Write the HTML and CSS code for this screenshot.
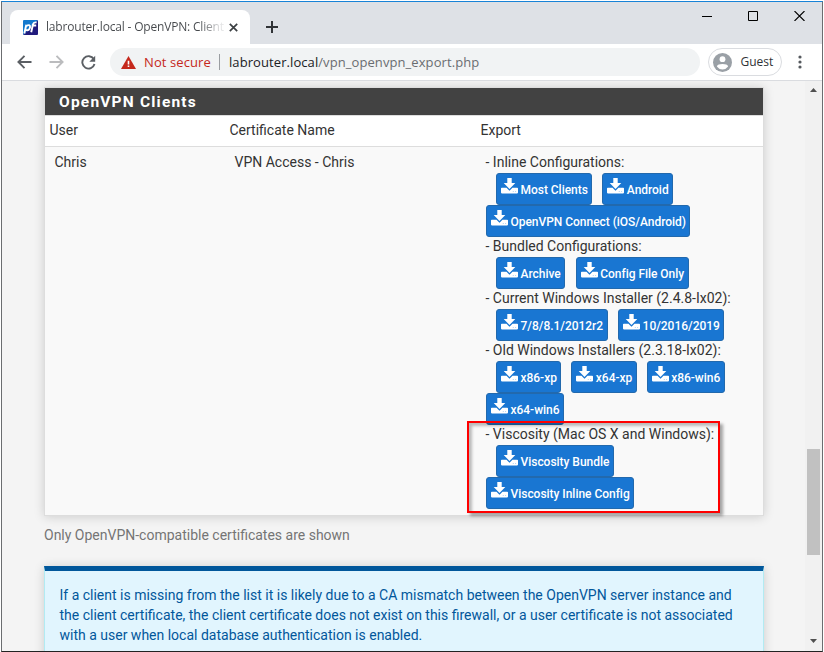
FILE: index.html
```
<!DOCTYPE html>
<html lang="en">
<head>
<meta charset="utf-8">
<title>labrouter.local - OpenVPN: Client Export</title>
<link rel="stylesheet" href="styles.css">
</head>
<body>
<svg class="defs" aria-hidden="true">
  <symbol id="download" viewBox="0 0 17 16">
    <path fill="currentColor" d="M6.300 0h4.400v5h3.600L8.500 11 2.700 5h3.600zM.8 9.800h4.700L8.500 12.800l3-3h4.700q.8 0 .8.8v4q0 .8-.8.8H.8Q0 15.400 0 14.600v-4q0-.8.8-.8z"/>
    <path class="led" d="M11.800 13.200h.9v.9h-.9zM14.200 13.200h.9v.9h-.9z"/>
  </symbol>
</svg>
<div class="window">
  <header class="titlebar">
    <div class="tab">
      <svg class="favicon" width="15" height="15" viewBox="0 0 15 15">
        <defs><linearGradient id="fav" x1="0" y1="0" x2="1" y2="1"><stop offset=".45" stop-color="#1479cd"/><stop offset=".55" stop-color="#211a7c"/></linearGradient></defs>
        <rect width="15" height="15" rx="1" fill="url(#fav)"/>
        <g fill="none" stroke="#fff" stroke-width="1.900"><path d="M1.300 13.500 3.300 4.800M3 6.200Q7.300 3.700 7.100 7.200 6.400 11.200 2.800 9.900"/><path d="M8.200 12.200 10 4.300Q10.600 1.900 13.600 2.500M8.700 5.500h4.500"/></g>
      </svg>
      <span class="tab-title">labrouter.local - OpenVPN: Client</span>
      <svg class="tab-close" width="9" height="9" viewBox="0 0 9 9"><path d="M.8.8l7.400 7.400M8.200.8.8 8.200" stroke="#3c4043" stroke-width="1.700"/></svg>
    </div>
    <svg class="new-tab" width="12" height="12" viewBox="0 0 12 12"><path d="M6 0v12M0 6h12" stroke="#303336" stroke-width="2"/></svg>
    <div class="controls">
      <svg width="10" height="10" viewBox="0 0 10 10"><path d="M0 5.500h10" stroke="#000"/></svg>
      <svg width="10" height="10" viewBox="0 0 10 10"><path d="M.5.5h9v9h-9z" fill="none" stroke="#000"/></svg>
      <svg width="11" height="10" viewBox="0 0 11 10"><path d="M.5 0l10 10M10.500 0l-10 10" stroke="#000" stroke-width="1.100"/></svg>
    </div>
  </header>
  <nav class="toolbar">
    <svg class="back" width="15" height="14" viewBox="0 0 15 14"><path d="M14.500 7H2M7.500.8 1.400 7l6.100 6.200" fill="none" stroke="#5b5f64" stroke-width="1.900"/></svg>
    <svg class="forward" width="15" height="14" viewBox="0 0 15 14"><path d="M.5 7H13M7.500.8 13.600 7l-6.100 6.200" fill="none" stroke="#bbbcbe" stroke-width="1.900"/></svg>
    <svg class="reload" width="15" height="15" viewBox="0 0 15 15"><path d="M12.800 4.100A6.200 6.200 0 1 0 13.500 9" fill="none" stroke="#5b5f64" stroke-width="1.900"/><path d="M14.200.8v6H8.300z" fill="#5b5f64"/></svg>
    <div class="omnibox">
      <svg width="15" height="13" viewBox="0 0 15 13"><path d="M7.500 0 15 13H0z" fill="#c5281c"/><path d="M6.700 4.800h1.600v3.600H6.700zM6.700 9.500h1.600v1.600H6.700z" fill="#fff"/></svg>
      <span class="insecure">Not secure</span>
      <span class="divider"></span>
      <span class="url"><b>labrouter.local</b>/vpn_openvpn_export.php</span>
    </div>
    <div class="profile">
      <svg width="19" height="19" viewBox="0 0 19 19"><circle cx="9.500" cy="9.500" r="9.500" fill="#9aa0a6"/><circle cx="9.500" cy="6.200" r="2.900" fill="#fff"/><path d="M3.900 13.400C4.300 10.200 14.700 10.200 15.100 13.400Q13 16.400 9.500 16.400T3.900 13.400z" fill="#fff"/></svg>
      <span>Guest</span>
    </div>
    <svg class="menu" width="4" height="14" viewBox="0 0 4 14"><g fill="#55595e"><circle cx="2" cy="2" r="1.600"/><circle cx="2" cy="7" r="1.600"/><circle cx="2" cy="12" r="1.600"/></g></svg>
  </nav>
  <div class="viewport">
    <main class="page">
      <section class="panel">
        <h2>OpenVPN Clients</h2>
        <div class="row head"><span>User</span><span>Certificate Name</span><span>Export</span></div>
        <div class="row body">
          <span>Chris</span><span>VPN Access - Chris</span>
          <div class="exports">
            <p>- Inline Configurations:</p>
            <div class="buttons indent"><a><svg><use href="#download"/></svg>Most Clients</a><a><svg><use href="#download"/></svg>Android</a></div>
            <div class="buttons"><a><svg><use href="#download"/></svg>OpenVPN Connect (iOS/Android)</a></div>
            <p>- Bundled Configurations:</p>
            <div class="buttons indent wide"><a><svg><use href="#download"/></svg>Archive</a><a><svg><use href="#download"/></svg>Config File Only</a></div>
            <p>- Current Windows Installer (2.4.8-Ix02):</p>
            <div class="buttons indent wide"><a><svg><use href="#download"/></svg>7/8/8.1/2012r2</a><a><svg><use href="#download"/></svg>10/2016/2019</a></div>
            <p>- Old Windows Installers (2.3.18-Ix02):</p>
            <div class="buttons indent"><a><svg><use href="#download"/></svg>x86-xp</a><a><svg><use href="#download"/></svg>x64-xp</a><a><svg><use href="#download"/></svg>x86-win6</a></div>
            <div class="buttons"><a><svg><use href="#download"/></svg>x64-win6</a></div>
            <div class="viscosity">
              <p>- Viscosity (Mac OS X and Windows):</p>
              <div class="buttons indent"><a><svg><use href="#download"/></svg>Viscosity Bundle</a></div>
              <div class="buttons"><a><svg><use href="#download"/></svg>Viscosity Inline Config</a></div>
              <i class="highlight"></i>
            </div>
          </div>
        </div>
      </section>
      <p class="help">Only OpenVPN-compatible certificates are shown</p>
      <div class="info">If a client is missing from the list it is likely due to a CA mismatch between the OpenVPN server instance and<br>the client certificate, the client certificate does not exist on this firewall, or a user certificate is not associated<br>with a user when local database authentication is enabled.</div>
    </main>
    <div class="scrollbar">
      <svg width="7" height="4" viewBox="0 0 7 4"><path d="M0 4 3.500 0 7 4z" fill="#505050"/></svg>
      <div class="thumb"></div>
      <svg width="7" height="4" viewBox="0 0 7 4"><path d="M0 0h7L3.500 4z" fill="#505050"/></svg>
    </div>
  </div>
</div>
</body>
</html>
```
FILE: styles.css
```
* { box-sizing: border-box; }
body { margin: 0; background: #fff; overflow: hidden; font: 14px/20px Roboto, sans-serif; }
p, h2 { margin: 0; }
svg { flex: none; display: block; }
.defs { position: absolute; width: 0; height: 0; }

.window {
  width: 822px; height: 651px; margin: 1px 0 0 1px;
  display: flex; flex-direction: column;
  border: 1px solid #6b6d70; border-top-color: #1883d7; border-bottom-color: #222;
  font-family: "Open Sans", sans-serif;
}

.titlebar { height: 42px; flex: none; background: #dee1e6; display: flex; align-items: flex-start; }
.tab {
  width: 240px; height: 34px; margin: 8px 0 0 8px; padding: 0 0 0 12.500px;
  display: flex; align-items: center; background: #fff; border-radius: 8px 8px 0 0;
}
.tab-title {
  width: 182px; flex: none; margin-left: 8.500px; white-space: nowrap;
  font-size: 12px; line-height: 20px; letter-spacing: -.18px;
  background: linear-gradient(90deg, #45484c 84%, #e2e3e4 96%); -webkit-background-clip: text; color: transparent;
}
.tab-close { margin-left: 1px; }
.new-tab { margin: 19px 0 0 16px; }
.controls { display: flex; gap: 36px; margin: 9px 17px 0 auto; }

.toolbar { height: 36px; flex: none; background: #fff; display: flex; align-items: center; padding-left: 14.500px; }
.forward { margin-left: 17px; }
.reload { margin-left: 17px; }
.omnibox {
  width: 590px; height: 28px; margin-left: 14.500px; padding-left: 10.500px;
  border-radius: 14px; background: #f1f3f4; display: flex; align-items: center; white-space: nowrap; font-size: 13px;
}
.insecure { width: 67px; margin-left: 8.500px; color: #c5281c; letter-spacing: .1px; }
.divider { width: 1px; height: 16px; margin: 0 9px 0 8px; background: #9a9da1; }
.url { color: #6a6d71; letter-spacing: .08px; }
.url b { font-weight: 400; color: #202124; }
.profile {
  width: 74px; height: 28px; margin-left: 8px; padding-left: 3.500px;
  border: 1px solid #dadce0; border-radius: 14px; display: flex; align-items: center; gap: 9px;
  font-size: 12px; color: #303336;
}
.menu { margin-left: 16px; }

.viewport { flex: 1; min-height: 0; display: flex; border-top: 1px solid #dadce0; background: #f4f4f4; overflow: hidden; }
.page { flex: 1; padding: 6px 41px 0 42px; font-family: Roboto, sans-serif; color: #333; }
.panel {
  height: 429px; border: 1px solid #ddd; background: #f9f9f9;
  box-shadow: 0 1px 10px rgba(0, 0, 0, .16);
}
.panel h2 {
  height: 27px; padding: 4px 0 0 14px; background: #424242; color: #fff;
  font-size: 15.500px; line-height: 20px; font-weight: 700; letter-spacing: 1.200px;
}
.row { display: grid; grid-template-columns: 180px 251px 1fr; padding-left: 4.500px; }
.head { height: 32px; padding-top: 4px; background: #fff; border-top: 1px solid #ddd; border-bottom: 1px solid #ddd; }
.body { padding: 5px 0 0 9.500px; white-space: nowrap; }
.exports p { height: 21px; }
.exports .buttons + p, .viscosity p { margin-top: -1px; }
.buttons { display: flex; gap: 10px; padding-left: .5px; }
.indent { padding-left: 10.500px; }
.wide { gap: 10.500px; }
.buttons a {
  height: 32px; padding: 0 3.500px 0 4px; display: flex; align-items: flex-start;
  background: #1976d2; border: 1px solid #2269ad; border-radius: 3px;
  color: #fff; font-size: 12px; line-height: 32px; font-weight: 500; letter-spacing: -.03px;
}
.buttons svg { width: 17px; height: 16px; margin: 4px 2.500px 0 0; }
.led { fill: #8fbdea; }
.viscosity { position: relative; width: 230px; }
.highlight {
  position: absolute; left: -18.500px; top: -3px; width: 253px; height: 92px;
  border: 2px solid #f00; box-shadow: 3px 3px 3px rgba(0, 0, 0, .35), inset 3px 3px 3px rgba(0, 0, 0, .25);
}
.help { margin-top: 9px; color: #757575; }
.info {
  height: 110px; margin-top: 21px; padding: 14px 0 0 14.500px;
  border: 1px solid #b2ebf2; border-top: 5px solid #01579b; background: #e1f5fe;
  box-shadow: 0 1px 10px rgba(0, 0, 0, .16); color: #01579b; white-space: nowrap;
}
.scrollbar { width: 17px; background: #f1f1f1; display: flex; flex-direction: column; align-items: center; padding: 7px 0 8px; }
.thumb { width: 13px; height: 106px; margin: 357px 0 auto; background: #c1c1c1; }
```
